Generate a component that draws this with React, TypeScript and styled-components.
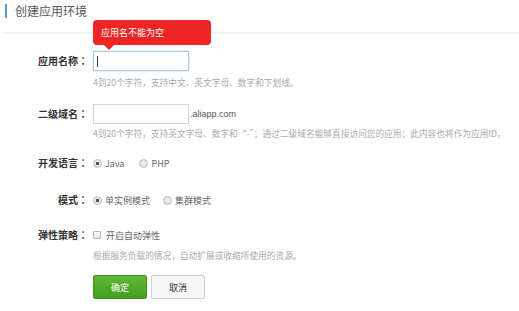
import React from "react";
import styled, {createGlobalStyle} from "styled-components";

const GlobalStyle = createGlobalStyle`
  html, body {
    margin: 0;
    padding: 0;
    background: #fff;
  }
  body {
    font-family: "Noto Sans CJK SC", "Noto Sans", sans-serif;
    color: #333;
  }
`;

const Page = styled.div`
  width: 519px;
  height: 311px;
  padding-left: 4px;
  box-sizing: border-box;
  overflow: hidden;
`;

const Header = styled.div`
  height: 34px;
  border-bottom: 2px solid #f0f0f5;
  display: flex;
  align-items: flex-start;
  padding-top: 4px;
  box-sizing: border-box;
`;

const Title = styled.h2`
  margin: 0;
  font-size: 12px;
  font-weight: normal;
  line-height: 14px;
  color: #555;
  padding-left: 8px;
  border-left: 2px solid #5b9bd8;
  margin-left: 1px;
`;

const Form = styled.div`
  display: flex;
  flex-direction: column;
`;

const Row = styled.div<{ $mt: number }>`
  display: grid;
  grid-template-columns: 84px 1fr;
  column-gap: 5px;
  align-items: center;
  margin-top: ${p => p.$mt}px;
`;

const Label = styled.label`
  text-align: right;
  font-size: 10px;
  font-weight: bold;
  color: #333;
  line-height: 14px;
  white-space: nowrap;
`;

const Colon = styled.span`
  font-family: "Noto Sans CJK TC", "Noto Sans CJK SC", sans-serif;
`;

const Control = styled.div`
  position: relative;
  display: flex;
  align-items: center;
  min-height: 14px;
`;

const Hint = styled.div<{ $mt: number }>`
  margin: ${p => p.$mt}px 0 0 89px;
  font-size: 8.7px;
  line-height: 12px;
  color: #aaa;
  white-space: nowrap;
`;

const TextInput = styled.div<{ $focused?: boolean }>`
  width: 96px;
  height: 20px;
  box-sizing: border-box;
  border: 1px solid ${p => (p.$focused ? "#a8c9ec" : "#d6d6d6")};
  box-shadow: ${p => (p.$focused ? "0 0 2px rgba(120,170,230,0.5)" : "none")};
  background: #fff;
  display: flex;
  align-items: center;
  padding-left: 3px;
`;

const Caret = styled.span`
  width: 1px;
  height: 11px;
  background: #333;
`;

const Suffix = styled.span`
  font-family: "Liberation Sans", Arial, sans-serif;
  font-size: 9px;
  color: #555;
  margin-left: 1px;
`;

const Tooltip = styled.div`
  position: absolute;
  left: 0;
  bottom: 26px;
  width: 118px;
  height: 25px;
  box-sizing: border-box;
  background: #ef2424;
  border-radius: 4px;
  color: #fff;
  font-size: 9px;
  line-height: 25px;
  padding-left: 8px;
  white-space: nowrap;

  &::after {
    content: "";
    position: absolute;
    left: 11px;
    bottom: -5px;
    border-left: 5px solid transparent;
    border-right: 5px solid transparent;
    border-top: 5px solid #ef2424;
  }
`;

const Option = styled.span<{ $gap: number }>`
  display: inline-flex;
  align-items: center;
  margin-right: ${p => p.$gap}px;
  font-size: 9px;
  color: #666;
`;

const Radio = styled.span<{ $checked?: boolean }>`
  width: 9px;
  height: 9px;
  box-sizing: border-box;
  border-radius: 50%;
  border: 1px solid #bdbdbd;
  background: radial-gradient(circle, ${p => (p.$checked ? "#555 0 1.6px, #e6e6e6 2px" : "#f2f2f2 0, #dcdcdc 100%")});
  margin-right: 3px;
`;

const Checkbox = styled.span`
  width: 8px;
  height: 8px;
  box-sizing: border-box;
  border: 1px solid #b5b5b5;
  border-radius: 1px;
  background: linear-gradient(#fff, #e6e6e6);
  margin-right: 5px;
`;

const Actions = styled.div`
  display: flex;
  gap: 4px;
  margin: 13px 0 0 89px;
`;

const Button = styled.button<{ $primary?: boolean }>`
  width: 54px;
  height: 24px;
  box-sizing: border-box;
  font-family: inherit;
  font-size: 9px;
  padding: 0;
  border-radius: 2px;
  cursor: pointer;
  border: 1px solid ${p => (p.$primary ? "#3c8d1b" : "#cfcfcf")};
  color: ${p => (p.$primary ? "#fff" : "#333")};
  background: ${p => (p.$primary ? "linear-gradient(#5fb835, #44a01f)" : "#f6f6f6")};
`;

const FieldLabel = ({text}: { text: string }) => (
  <Label>
    {text}
    <Colon>：</Colon>
  </Label>
);

export default function App() {
  return (
    <Page>
      <GlobalStyle />
      <Header>
        <Title>创建应用环境</Title>
      </Header>
      <Form>
        <Row $mt={17}>
          <FieldLabel text="应用名称" />
          <Control>
            <Tooltip>应用名不能为空</Tooltip>
            <TextInput $focused>
              <Caret />
            </TextInput>
          </Control>
        </Row>
        <Hint $mt={6}>4到20个字符，支持中文、英文字母、数字和下划线。</Hint>

        <Row $mt={15}>
          <FieldLabel text="二级域名" />
          <Control>
            <TextInput />
            <Suffix>.aliapp.com</Suffix>
          </Control>
        </Row>
        <Hint $mt={4}>4到20个字符，支持英文字母、数字和“-”；通过二级域名能够直接访问您的应用；此内容也将作为应用ID。</Hint>

        <Row $mt={16}>
          <FieldLabel text="开发语言" />
          <Control>
            <Option $gap={15}><Radio $checked />Java</Option>
            <Option $gap={0}><Radio />PHP</Option>
          </Control>
        </Row>

        <Row $mt={23}>
          <FieldLabel text="模式" />
          <Control>
            <Option $gap={13}><Radio $checked />单实例模式</Option>
            <Option $gap={0}><Radio />集群模式</Option>
          </Control>
        </Row>

        <Row $mt={21}>
          <FieldLabel text="弹性策略" />
          <Control>
            <Option $gap={0}><Checkbox />开启自动弹性</Option>
          </Control>
        </Row>
        <Hint $mt={8}>根据服务负载的情况，自动扩展或收缩所使用的资源。</Hint>

        <Actions>
          <Button $primary>确定</Button>
          <Button>取消</Button>
        </Actions>
      </Form>
    </Page>
  );
}
